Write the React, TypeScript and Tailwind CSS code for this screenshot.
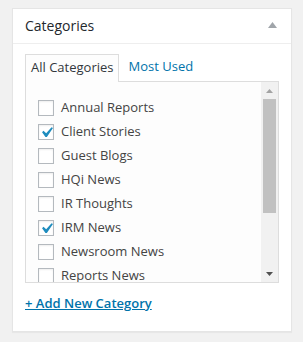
import React from "react";

const items: { label: string; checked: boolean }[] = [
  { label: "Annual Reports", checked: false },
  { label: "Client Stories", checked: true },
  { label: "Guest Blogs", checked: false },
  { label: "HQi News", checked: false },
  { label: "IR Thoughts", checked: false },
  { label: "IRM News", checked: true },
  { label: "Newsroom News", checked: false },
  { label: "Reports News", checked: false },
];

function Check({ checked }: { checked: boolean }) {
  return (
    <span className="w-[16px] h-[16px] shrink-0 border border-[#b4b9be] bg-white shadow-[inset_0_1px_2px_rgba(0,0,0,0.07)] flex items-center justify-center">
      {checked && (
        <svg width="21" height="21" viewBox="0 0 20 20" className="shrink-0">
          <path d="M14.83 4.89l1.34.94-5.81 8.38H9.02L5.78 9.67l1.34-1.25 2.57 2.4z" fill="#1e8cbe" />
        </svg>
      )}
    </span>
  );
}

export default function App() {
  return (
    <div
      className="min-h-[342px] bg-[#f1f1f1] pl-[12px] pt-[8px]"
      style={{ fontFamily: '"Open Sans", "Liberation Sans", sans-serif' }}
    >
      <div className="w-[280px] h-[324px] bg-white border border-[#e5e5e5] shadow-[0_1px_1px_rgba(0,0,0,0.04)] flex flex-col">
        <div className="h-[35px] border-b border-[#eeeeee] flex items-center justify-between pl-[12px] pr-[14px]">
          <span className="text-[14px] leading-none text-[#23282d] pb-[1px]">Categories</span>
          <svg width="9" height="6" viewBox="0 0 9 6" className="mb-[2px]">
            <path d="M0 6 L4.5 0 L9 6 Z" fill="#a0a5aa" />
          </svg>
        </div>
        <div className="px-[12px] pt-[9px]">
          <div className="flex items-end gap-[4px]">
            <div className="relative z-10 -mb-px h-[28px] px-[5px] pb-[1px] border border-b-0 border-[#dddddd] bg-[#fdfdfd] flex items-center text-[13px] text-[#32373c]">
              All Categories
            </div>
            <div className="h-[28px] px-[5px] pb-[1px] flex items-center text-[13px] text-[#0073aa]">
              Most Used
            </div>
          </div>
          <div className="h-[202px] border border-[#dddddd] bg-[#fdfdfd] flex">
            <div className="flex-1 overflow-hidden pl-[12px] pt-[14px]">
              {items.map((it) => (
                <div key={it.label} className="h-[24px] flex items-center gap-[7px] text-[13px] text-[#444444] whitespace-nowrap">
                  <Check checked={it.checked} />
                  <span>{it.label}</span>
                </div>
              ))}
            </div>
            <div className="w-[17px] bg-[#f1f1f1] flex flex-col items-center">
              <div className="h-[17px] w-full flex items-center justify-center">
                <svg width="7" height="4" viewBox="0 0 7 4">
                  <path d="M0 4 L3.5 0 L7 4 Z" fill="#a3a3a3" />
                </svg>
              </div>
              <div className="w-[13px] h-[114px] bg-[#c1c1c1]" />
              <div className="flex-1" />
              <div className="h-[17px] w-full flex items-center justify-center">
                <svg width="7" height="4" viewBox="0 0 7 4">
                  <path d="M0 0 L7 0 L3.5 4 Z" fill="#505050" />
                </svg>
              </div>
            </div>
          </div>
          <div className="mt-[10px] leading-[18px]">
            <a className="text-[13px] font-semibold text-[#0073aa] underline">+ Add New Category</a>
          </div>
        </div>
      </div>
    </div>
  );
}
